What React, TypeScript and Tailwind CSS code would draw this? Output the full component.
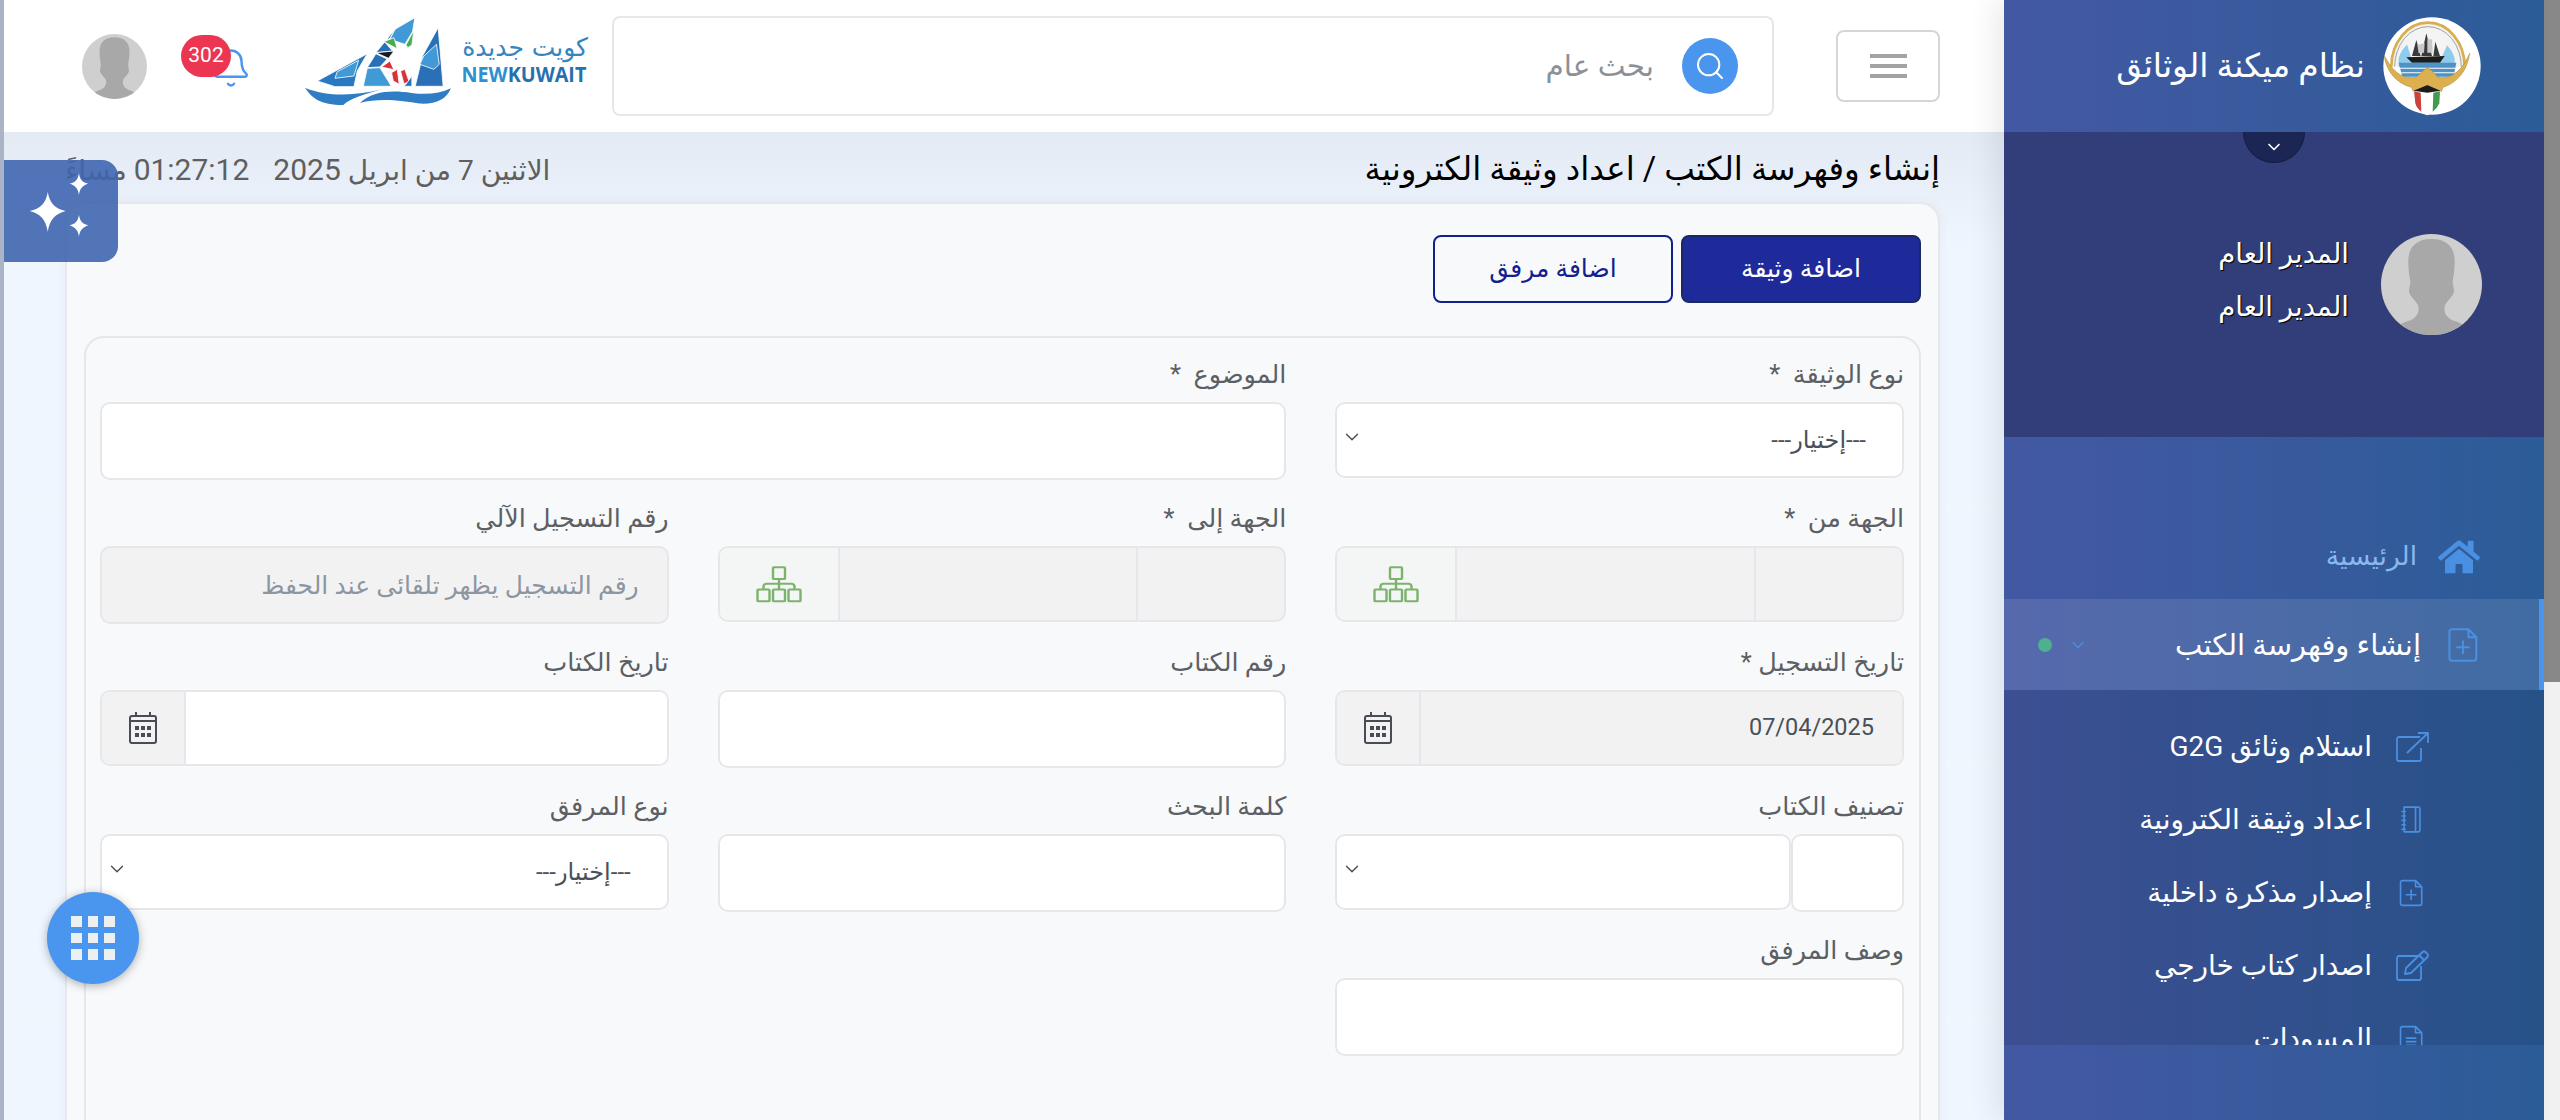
import React from 'react';
import { Bell, ChevronDown, Search } from 'lucide-react';
import { FaHome } from 'react-icons/fa';

const boxCls = 'border-2 border-[#e6e7ea] rounded-[10px] px-7 text-[24px] text-[#495057] outline-none';
const inputCls = `block h-[78px] -mb-[2px] ${boxCls}`;

const Avatar = ({ className }: { className: string }) => (
  <svg viewBox="0 0 100 100" className={className}>
    <clipPath id="avatarClip">
      <circle cx="50" cy="50" r="50" />
    </clipPath>
    <g clipPath="url(#avatarClip)">
      <rect width="100" height="100" fill="#cfcfcf" />
      <path
        d="M50 5c-15 0-23 8-23 22 0 8 1 14 2 20 0 5-2 7-1 11 2 6 8 9 9 14 1 6-2 11-9 14-8 2-14 6-18 14h80c-4-8-10-12-18-14-7-3-10-8-9-14 1-5 7-8 9-14 1-4-1-6-1-11 1-6 2-12 2-20 0-14-8-22-23-22z"
        fill="#a8a8a8"
      />
    </g>
  </svg>
);

const Emblem = () => (
  <svg viewBox="122 48 300 300" className="w-[100px] h-[100px] shrink-0">
    <circle cx="272" cy="198" r="146" fill="#ffffff" />
    <path d="M150 200 A110 132 0 0 1 370 200" fill="#f3f3f3" stroke="#d9ae4c" strokeWidth="8" />
    <path d="M160 200 A100 120 0 0 1 360 200" fill="none" stroke="#a0a0a0" strokeWidth="3" />
    <path d="M172 175 A88 92 0 0 1 340 175 L340 200 L172 200z" fill="#8fcbea" />
    <path d="M196 130 A70 60 0 0 1 320 130 L300 175 L210 175z" fill="#f4f4f4" />
    <path d="M195 172 L310 168 L296 188 L212 188z" fill="#1d1d1d" />
    <path d="M212 168 L225 120 L238 168z M240 168 L255 100 L272 168z M276 168 L282 125 L296 168z" fill="#3a3a3a" />
    <path d="M228 135 L250 130 L248 158 L232 160z M258 118 L272 118 L274 158 L258 158z" fill="#c9c9c9" />
    <path d="M172 188 H345 L335 238 H185z" fill="#4d93c6" />
    <path d="M176 203 H342 V206 H176z M180 217 H338 V220 H180z M186 230 H330 V233 H186z" fill="#ffffff" />
    <path d="M128 165 C150 205 175 240 225 232 L245 212 L258 203 L272 212 L290 232 C335 240 365 205 385 160 C378 215 345 250 305 262 L300 275 H216 L210 262 C165 250 135 215 128 165z" fill="#dcb04e" stroke="#a5853c" strokeWidth="1.5" />
    <path d="M216 272 L258 255 L298 272 L294 310 Q280 340 258 346 Q232 340 222 310z" fill="#ffffff" />
    <path d="M216 272 L258 255 L298 272 L258 278z" fill="#1c1c1c" />
    <path d="M218 274 L238 278 L240 335 Q226 325 222 310z" fill="#c9423d" />
    <path d="M296 274 L276 278 L274 335 Q288 325 294 310z" fill="#3f9c4d" />
  </svg>
);

const Logo = () => (
  <svg viewBox="60 30 880 300" className="w-[293px] h-[100px] shrink-0">
    <g stroke="#ffffff" strokeWidth="2.5">
      <polygon points="112,240 262,158 232,210 222,257 165,257" fill="#2a78c2" />
      <polygon points="172,212 236,178 222,225 165,232" fill="#3f9ad6" />
      <polygon points="405,50 345,85 330,115 375,130 398,92" fill="#3f9ad6" />
      <polygon points="345,85 288,155 338,150 312,120 330,112" fill="#2a70b8" />
      <polygon points="312,122 342,110 352,143" fill="#46ab55" />
      <polygon points="378,132 402,88 396,132 384,140" fill="#46ab55" />
      <polygon points="288,155 342,150 326,172" fill="#1a1a1a" />
      <polygon points="305,198 330,180 342,206" fill="#d9323a" />
      <polygon points="362,210 375,205 388,243 372,248" fill="#d9323a" />
      <polygon points="335,215 352,205 358,250 340,240" fill="#d9323a" />
      <polygon points="288,158 322,174 300,198 262,200" fill="#2a70b8" />
      <polygon points="262,202 300,200 326,242 334,256 250,256" fill="#3f9ad6" />
      <polygon points="475,80 490,256 406,256 428,165" fill="#2a70b8" />
      <polygon points="432,165 470,130 478,190 462,205 420,190" fill="#3f9ad6" />
      <polygon points="378,250 396,225 396,256 372,256" fill="#2a70b8" />
    </g>
    <path d="M75 260 C140 288 230 285 305 265 C250 282 215 290 190 312 C120 312 95 290 75 260z" fill="#2f7dc4" />
    <path d="M240 306 C280 268 340 268 395 276 C440 282 480 278 513 262 C500 295 470 310 420 308 C370 300 300 290 240 306z" fill="#2f7dc4" />
    <text x="925" y="165" direction="rtl" fontSize="76" fill="#3585bf" fontFamily="'DejaVu Sans', sans-serif" textLength="378" lengthAdjust="spacingAndGlyphs">كويت جديدة</text>
    <text x="545" y="242" fontSize="62" fontWeight="700" fontFamily="'Open Sans', sans-serif" textLength="375" lengthAdjust="spacingAndGlyphs" direction="ltr">
      <tspan fill="#2f90cf">NEW</tspan>
      <tspan fill="#2770ae">KUWAIT</tspan>
    </text>
  </svg>
);

const OrgIcon = () => (
  <svg viewBox="0 0 46 44" preserveAspectRatio="none" className="w-[46px] h-[37px]" fill="none" stroke="#7bb26d" strokeWidth="2.4">
    <rect x="17" y="1.5" width="12" height="14" rx="1" />
    <rect x="1.5" y="28" width="12" height="14" rx="1" />
    <rect x="17" y="28" width="12" height="14" rx="1" />
    <rect x="32.5" y="28" width="12" height="14" rx="1" />
    <path d="M23 15.5V28M7.5 28v-4a3 3 0 0 1 3-3h25a3 3 0 0 1 3 3v4" />
  </svg>
);

const CalendarIcon = () => (
  <svg viewBox="0 0 28 32" className="w-[28px] h-[32px]" fill="none" stroke="#474c55" strokeWidth="2">
    <rect x="1" y="4" width="26" height="27" rx="2" />
    <path d="M1 9h26M7 0v4M21 0v4" />
    <g fill="#474c55" stroke="none">
      <rect x="6" y="14" width="4" height="4" />
      <rect x="12" y="14" width="4" height="4" />
      <rect x="18" y="14" width="4" height="4" />
      <rect x="6" y="21" width="4" height="4" />
      <rect x="12" y="21" width="4" height="4" />
      <rect x="18" y="21" width="4" height="4" />
    </g>
  </svg>
);

const Sparkles = () => (
  <svg viewBox="0 0 72 80" className="w-[68px] h-[76px]" fill="#ffffff">
    <path d="M22 20c2 12 8 18 19 20-11 3-17 9-19 22-2-13-8-19-19-22 11-2 17-8 19-20z" />
    <path d="M55 0c1 7 4 10 10 11-6 2-9 5-10 12-1-7-4-10-10-12 6-1 9-4 10-11z" />
    <path d="M55 44c1 7 4 10 10 11-6 2-9 5-10 12-1-7-4-10-10-12 6-1 9-4 10-11z" />
  </svg>
);

// outline icons of the side menu, all drawn on the same 34x32 box
const MenuIcon = ({ kind, className }: { kind: string; className: string }) => (
  <svg viewBox="0 0 34 32" className={className} fill="none" stroke="#4a90e2" strokeWidth="1.8" strokeLinejoin="round">
    {kind === 'external' && <path d="M25 6H4a2 2 0 0 0-2 2v20a2 2 0 0 0 2 2h20a2 2 0 0 0 2-2V17M12 22L33 2M23 2h10v10" />}
    {kind === 'notebook' && <path d="M8 2h16a2 2 0 0 1 2 2v24a2 2 0 0 1-2 2H8zM21 2v28M8 2v28M5 7h5M5 12h5M5 17h5M5 22h5M5 27h5" />}
    {kind === 'file-plus' && <path d="M6 2h15l7 7v19a2 2 0 0 1-2 2H6a2 2 0 0 1-2-2V4a2 2 0 0 1 2-2zM21 2v7h7M16 12v12M10 18h12" />}
    {kind === 'pen' && <path d="M25 6H4a2 2 0 0 0-2 2v20a2 2 0 0 0 2 2h20a2 2 0 0 0 2-2V16M11 18L27 2.5a2.5 2.5 0 0 1 4 0l1 1a2.5 2.5 0 0 1 0 4L16 23l-6 1zM24 5l5 5" />}
    {kind === 'file-text' && <path d="M6 2h15l7 7v19a2 2 0 0 1-2 2H6a2 2 0 0 1-2-2V4a2 2 0 0 1 2-2zM21 2v7h7M10 15h12M10 19h12M10 23h12" />}
  </svg>
);

const Field = ({ label, span, children }: { label: string; span?: boolean; children: React.ReactNode }) => (
  <div className={span ? 'col-span-2' : ''}>
    <label className="block h-[40px] mb-2 leading-[40px] text-[25.5px] text-[#5c5f63] whitespace-pre">{label}</label>
    {children}
  </div>
);

const SelectBox = ({ className, empty }: { className?: string; empty?: boolean }) => (
  <div className={`relative ${className ?? 'w-full'}`}>
    <select className={`block w-full h-[76px] bg-white appearance-none pr-[36px] ${boxCls}`} defaultValue="">
      <option value="">{empty ? '' : '---إختيار---'}</option>
    </select>
    <ChevronDown className="absolute left-[6px] top-[24px] w-[22px] h-[22px] text-[#474c55] pointer-events-none" strokeWidth={1.5} />
  </div>
);

const OrgGroup = () => (
  <div className="flex h-[76px] border-2 border-[#e6e7ea] rounded-[10px] bg-[#f2f2f3] overflow-hidden">
    <div className="w-[148px] shrink-0 border-l-2 border-[#e6e7ea]" />
    <div className="flex-1 border-l-2 border-[#e6e7ea]" />
    <div className="w-[118px] shrink-0 flex items-center justify-center bg-[#f4f5f5]">
      <OrgIcon />
    </div>
  </div>
);

const DateGroup = ({ value, disabled }: { value?: string; disabled?: boolean }) => (
  <div className="flex h-[76px] border-2 border-[#e6e7ea] rounded-[10px] overflow-hidden">
    <div className={`flex-1 flex items-center px-7 text-[23.5px] text-[#495057] ${disabled ? 'bg-[#f2f2f3]' : 'bg-white'}`}>{value}</div>
    <div className="w-[84px] shrink-0 flex items-center justify-center bg-[#f2f2f3] border-r-2 border-[#e6e7ea]">
      <CalendarIcon />
    </div>
  </div>
);

const subItems = [
  { label: 'استلام وثائق G2G', icon: 'external', size: 'w-[34px] h-[32px]' },
  { label: 'اعداد وثيقة الكترونية', icon: 'notebook', size: 'w-[30px] h-[29px]' },
  { label: 'إصدار مذكرة داخلية', icon: 'file-plus', size: 'w-[30px] h-[30px]' },
  { label: 'اصدار كتاب خارجي', icon: 'pen', size: 'w-[34px] h-[32px]' },
  { label: 'المسودات', icon: 'file-text', size: 'w-[30px] h-[30px]' },
];

const Sidebar = () => (
  <aside className="relative z-20 w-[540px] shrink-0 h-full flex flex-col bg-gradient-to-l from-[#2b5c98] to-[#4358a3] shadow-[-12px_0_24px_rgba(0,0,0,0.07)]">
    <div className="h-[132px] shrink-0 flex items-center pr-[62px] gap-[17px]">
      <Emblem />
      <span className="text-[33px] text-white">نظام ميكنة الوثائق</span>
    </div>

    <div className="relative h-[305px] shrink-0 bg-[#323e7a] flex items-start pt-[102px] pr-[62px] gap-[32px]">
      <div className="absolute top-0 right-[239px] w-[62px] h-[31px] rounded-b-full bg-[#1c2654] border border-t-0 border-[#151d42] flex items-center justify-center">
        <ChevronDown className="w-[20px] h-[20px] text-white" strokeWidth={2} />
      </div>
      <Avatar className="w-[101px] h-[101px] shrink-0" />
      <div className="text-[27.5px] text-white [text-shadow:1px_1px_1px_#000] leading-[53px] -mt-[7px]">
        <div>المدير العام</div>
        <div>المدير العام</div>
      </div>
    </div>

    <div className="h-[78px] shrink-0" />
    <div className="h-[84px] shrink-0 flex items-center pr-[64px] gap-[21px]">
      <FaHome className="w-[42px] h-[38px] text-[#4a90e2]" />
      <span className="text-[26.5px] text-[#8ab8ec] -mt-[2px]">الرئيسية</span>
    </div>

    <div className="h-[91px] shrink-0 flex items-center pr-[59px] bg-white/10 border-r-[5px] border-[#4a96ee]">
      <MenuIcon kind="file-plus" className="w-[38px] h-[38px] -mr-[3px]" />
      <span className="flex-1 text-[29px] text-white mr-[24px] mt-[3px]">إنشاء وفهرسة الكتب</span>
      <ChevronDown className="w-[20px] h-[20px] text-[#4a90e2]" strokeWidth={1.5} />
      <span className="w-[14px] h-[14px] rounded-full bg-[#4eb08f] mr-[16px] ml-[34px]" />
    </div>

    <div className="h-[355px] shrink-0 overflow-hidden bg-black/10 pt-[20px]">
      {subItems.map(({ label, icon, size }) => (
        <div key={label} className="h-[73px] flex items-center pr-[114px] gap-[22px]">
          <span className="w-[36px] flex justify-center shrink-0">
            <MenuIcon kind={icon} className={size} />
          </span>
          <span className="text-[28px] text-white">{label}</span>
        </div>
      ))}
    </div>
  </aside>
);

const Main = () => (
  <main className="relative flex-1 h-full min-w-0 flex flex-col bg-[#eff6fe] border-l-4 border-[#aab4c6]">
    <header className="relative z-10 h-[132px] shrink-0 bg-white flex items-center pr-[64px]">
      <button className="w-[104px] h-[72px] shrink-0 border-2 border-[#d6d6d8] rounded-[8px] flex flex-col items-center justify-center gap-[6px] bg-white">
        <span className="w-[37px] h-[4px] bg-[#a3a3a3]" />
        <span className="w-[37px] h-[4px] bg-[#a3a3a3]" />
        <span className="w-[37px] h-[4px] bg-[#a3a3a3]" />
      </button>
      <div className="w-[1162px] h-[100px] shrink-0 mr-[62px] border-2 border-[#e6e7e9] rounded-[8px] bg-white flex items-center pr-[34px] gap-[28px]">
        <span className="w-[56px] h-[56px] rounded-full bg-[#4a96ee] flex items-center justify-center shrink-0">
          <Search className="w-[32px] h-[32px] text-white" strokeWidth={1.5} />
        </span>
        <span className="text-[29.5px] text-[#8c9198]">بحث عام</span>
      </div>
      <div className="mr-[19px] -mt-[10px]">
        <Logo />
      </div>
      <div className="relative w-[60px] h-[60px] mr-[52px] shrink-0">
        <Bell className="absolute left-[22px] top-[11px] w-[42px] h-[42px] text-[#4a96ee]" strokeWidth={1.4} />
        <span dir="ltr" className="absolute left-[-7px] top-[-1px] w-[50px] h-[42px] rounded-full bg-[#ec3550] flex items-center justify-center text-white text-[21px]">302</span>
      </div>
      <Avatar className="w-[65px] h-[65px] mr-[41px] shrink-0" />
    </header>

    <div className="flex-1 min-h-0 bg-gradient-to-b from-[#e3eaf4] to-[#eff6fe] to-[120px] pr-[64px] pl-[61px]">
      <div className="h-[70px] pt-[5px] flex items-center justify-between">
        <h1 className="text-[32.5px] text-black">إنشاء وفهرسة الكتب / اعداد وثيقة الكترونية</h1>
        <div className="flex items-center text-[28px] text-[#5f5f5f] gap-[24px]">
          <span>الاثنين 7 من ابريل <span className="text-[30px]">2025</span></span>
          <span><span className="text-[30px]">01:27:12</span> مساءً</span>
        </div>
      </div>

      <section className="h-[1000px] border-2 border-[#e6e8ee] rounded-[20px] bg-[#f8f9fb] px-[17px] pt-[31px] shadow-[0_0_12px_rgba(0,0,0,0.04)]">
        <div className="flex gap-2">
          <button className="w-[240px] h-[68px] rounded-[8px] bg-[#1e2a9a] border-2 border-[#1a2a60] text-white text-[25px]">اضافة وثيقة</button>
          <button className="w-[240px] h-[68px] rounded-[8px] border-2 border-[#10208e] text-[#10208e] text-[25px]">اضافة مرفق</button>
        </div>

        <div className="mt-[33px] h-[900px] border-2 border-[#e6e7ea] rounded-[20px] pr-[15px] pl-[14px] pt-[16px] grid grid-cols-3 gap-x-[49px] gap-y-[20px] content-start">
          <Field label="نوع الوثيقة  *">
            <SelectBox />
          </Field>
          <Field label="الموضوع  *" span>
            <input className={`w-full bg-white ${inputCls}`} />
          </Field>

          <Field label="الجهة من  *">
            <OrgGroup />
          </Field>
          <Field label="الجهة إلى  *">
            <OrgGroup />
          </Field>
          <Field label="رقم التسجيل الآلي">
            <input disabled placeholder="رقم التسجيل يظهر تلقائى عند الحفظ" className={`w-full bg-[#f2f2f3] !text-[25px] placeholder:text-[#8d96a0] ${inputCls}`} />
          </Field>

          <Field label="تاريخ التسجيل *">
            <DateGroup value="07/04/2025" disabled />
          </Field>
          <Field label="رقم الكتاب">
            <input className={`w-full bg-white ${inputCls}`} />
          </Field>
          <Field label="تاريخ الكتاب">
            <DateGroup />
          </Field>

          <Field label="تصنيف الكتاب">
            <div className="flex">
              <input className={`w-[113px] shrink-0 bg-white ${inputCls}`} />
              <SelectBox className="flex-1" empty />
            </div>
          </Field>
          <Field label="كلمة البحث">
            <input className={`w-full bg-white ${inputCls}`} />
          </Field>
          <Field label="نوع المرفق">
            <SelectBox />
          </Field>

          <Field label="وصف المرفق">
            <input className={`w-full bg-white ${inputCls}`} />
          </Field>
        </div>
      </section>
    </div>

    <button className="absolute z-20 left-0 top-[160px] w-[114px] h-[102px] rounded-r-[16px] bg-[#3f66af]/90 flex items-center justify-center">
      <Sparkles />
    </button>
    <button className="absolute z-20 left-[43px] top-[892px] w-[92px] h-[92px] rounded-full bg-[#4a96ee] shadow-[0_2px_10px_rgba(0,0,0,0.3)] grid grid-cols-3 gap-[6px] p-[24px]">
      {Array.from({ length: 9 }).map((_, i) => (
        <span key={i} className="bg-[#ecf0f1]" />
      ))}
    </button>
  </main>
);

export default function App() {
  return (
    <div dir="rtl" className="flex h-[1120px] w-[2560px] overflow-hidden font-['Roboto','DejaVu_Sans',sans-serif]">
      <div className="w-[16px] shrink-0 h-full bg-[#f1f1f1]">
        <div className="h-[682px] bg-[#888888]" />
      </div>
      <Sidebar />
      <Main />
    </div>
  );
}
